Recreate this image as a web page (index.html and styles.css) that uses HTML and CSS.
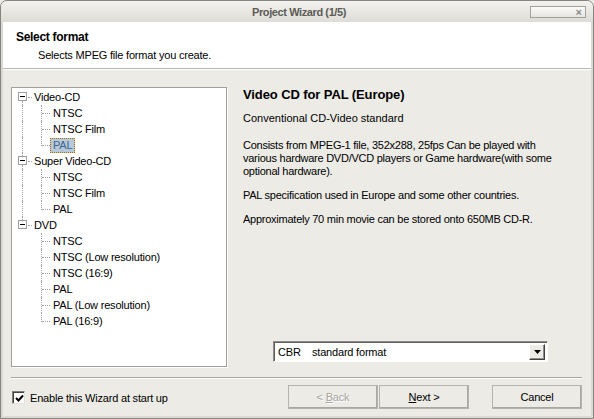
FILE: index.html
```html
<!DOCTYPE html>
<html>
<head>
<meta charset="utf-8">
<title>Project Wizard</title>
<link rel="stylesheet" href="styles.css">
</head>
<body>
<div class="window">
  <div class="titlebar">
    <span class="title">Project Wizard (1/5)</span>
    <span class="close"><span class="x">×</span></span>
  </div>
  <div class="client">
    <div class="header">
      <div class="h-title">Select format</div>
      <div class="h-sub">Selects MPEG file format you create.</div>
    </div>
    <div class="main">
      <div class="tree">
        <div class="row root first"><span class="vdown"></span><span class="box"></span><span class="hl"></span><span class="label">Video-CD</span></div>
        <div class="row child"><span class="trunk"></span><span class="cv"></span><span class="ch"></span><span class="label">NTSC</span></div>
        <div class="row child"><span class="trunk"></span><span class="cv"></span><span class="ch"></span><span class="label">NTSC Film</span></div>
        <div class="row child lastc"><span class="trunk"></span><span class="cv"></span><span class="ch"></span><span class="label sel">PAL</span></div>
        <div class="row root"><span class="vup"></span><span class="vdown"></span><span class="box"></span><span class="hl"></span><span class="label">Super Video-CD</span></div>
        <div class="row child"><span class="trunk"></span><span class="cv"></span><span class="ch"></span><span class="label">NTSC</span></div>
        <div class="row child"><span class="trunk"></span><span class="cv"></span><span class="ch"></span><span class="label">NTSC Film</span></div>
        <div class="row child lastc"><span class="trunk"></span><span class="cv"></span><span class="ch"></span><span class="label">PAL</span></div>
        <div class="row root"><span class="vup"></span><span class="box"></span><span class="hl"></span><span class="label">DVD</span></div>
        <div class="row child"><span class="cv"></span><span class="ch"></span><span class="label">NTSC</span></div>
        <div class="row child"><span class="cv"></span><span class="ch"></span><span class="label">NTSC (Low resolution)</span></div>
        <div class="row child"><span class="cv"></span><span class="ch"></span><span class="label">NTSC (16:9)</span></div>
        <div class="row child"><span class="cv"></span><span class="ch"></span><span class="label">PAL</span></div>
        <div class="row child"><span class="cv"></span><span class="ch"></span><span class="label">PAL (Low resolution)</span></div>
        <div class="row child lastc"><span class="cv"></span><span class="ch"></span><span class="label">PAL (16:9)</span></div>
      </div>
      <div class="detail">
        <div class="d-title">Video CD for PAL (Europe)</div>
        <p class="d-first">Conventional CD-Video standard</p>
        <p>Consists from MPEG-1 file, 352x288, 25fps Can be played with<br>various hardware DVD/VCD players or Game hardware(with some<br>optional hardware).</p>
        <p>PAL specification used in Europe and some other countries.</p>
        <p>Approximately 70 min movie can be stored onto 650MB CD-R.</p>
        <div class="combo">
          <span class="combo-text">CBR&nbsp;&nbsp;&nbsp; standard format</span>
          <span class="combo-btn"><svg width="7" height="4" viewBox="0 0 7 4"><path d="M0 0H7L3.5 4Z" fill="#000"/></svg></span>
        </div>
      </div>
    </div>
    <div class="sep"></div>
    <div class="footer">
      <label class="check">
        <span class="cbox"><svg width="9" height="9" viewBox="0 0 9 9"><path d="M1 4 L3.5 6.5 L8 1.5" stroke="#000" stroke-width="2" fill="none"/></svg></span>
        <span>Enable this Wizard at start up</span>
      </label>
      <div class="buttons">
        <button class="btn disabled">&lt; <u>B</u>ack</button>
        <button class="btn next"><u>N</u>ext &gt;</button>
        <button class="btn cancel">Cancel</button>
      </div>
    </div>
  </div>
</div>
</body>
</html>
```

FILE: styles.css
```css
* { box-sizing: border-box; }
html, body { margin: 0; padding: 0; background: #ecebe6; }
body {
  font-family: "Liberation Sans", Arial, sans-serif;
  font-size: 11px;
  color: #000;
}
.window {
  width: 594px;
  height: 419px;
  display: flex;
  flex-direction: column;
  background: #d9d8d2;
  border: 1px solid #85847f;
  border-radius: 7px 7px 0 0;
  overflow: hidden;
}
.titlebar {
  height: 21px;
  flex: none;
  display: flex;
  align-items: center;
  justify-content: center;
  position: relative;
  background: linear-gradient(#f3f2ee, #dedcd6);
}
.title {
  font-weight: bold;
  color: #5b5b58;
  letter-spacing: -0.4px;
  padding-left: 4px;
}
.close {
  position: absolute;
  right: 7px;
  top: 5px;
  width: 56px;
  height: 12px;
  border: 1px solid #a3a29c;
  background: linear-gradient(#fbfbf9, #e6e5e0);
  display: flex;
  justify-content: flex-end;
  align-items: center;
  padding-right: 3px;
}
.close .x {
  color: #8a8a86;
  font-size: 11px;
  font-weight: bold;
  line-height: 10px;
}
.client {
  flex: 1;
  display: flex;
  flex-direction: column;
  margin: 0 2px 2px 2px;
  background: #ecebe6;
}
.header {
  height: 47px;
  flex: none;
  background: #fff;
  border-bottom: 1px solid #b8b7b1;
  padding: 8px 0 0 13px;
}
.h-title {
  font-weight: bold;
  font-size: 12px;
  line-height: 14px;
  letter-spacing: -0.3px;
}
.h-sub {
  margin-top: 5px;
  padding-left: 22px;
  line-height: 13px;
  letter-spacing: -0.2px;
}
.main {
  height: 308px;
  flex: none;
  display: flex;
  padding: 17px 0 0 8px;
  border-top: 1px solid #fff;
}
.tree {
  width: 216px;
  height: 280px;
  flex: none;
  background: #fff;
  border: 1px solid #a09f9a;
  box-shadow: 1px 1px 0 #fff;
  padding-top: 1px;
}
.row {
  position: relative;
  height: 16px;
  display: flex;
  align-items: center;
}
.row .label {
  height: 15px;
  line-height: 13px;
  padding: 0 2px;
  border: 1px solid transparent;
  letter-spacing: -0.2px;
  white-space: nowrap;
}
.root .label { margin-left: 19px; }
.child .label { margin-left: 38px; }
.label.sel {
  background: #b7c8d8;
  color: #3b6790;
  border: 1px dotted #b06a00;
}
.box {
  position: absolute;
  left: 6px;
  top: 3px;
  width: 9px;
  height: 9px;
  border: 1px solid #9a9f9f;
  background: #fff;
}
.box::after {
  content: "";
  position: absolute;
  left: 1px;
  top: 3px;
  width: 5px;
  height: 1px;
  background: #000;
}
.hl {
  position: absolute;
  left: 16px;
  top: 8px;
  width: 4px;
  border-top: 1px dotted #a0a0a0;
}
.vup {
  position: absolute;
  left: 10px;
  top: 0;
  height: 3px;
  border-left: 1px dotted #a0a0a0;
}
.vdown {
  position: absolute;
  left: 10px;
  top: 12px;
  height: 4px;
  border-left: 1px dotted #a0a0a0;
}
.trunk {
  position: absolute;
  left: 10px;
  top: 0;
  height: 16px;
  border-left: 1px dotted #a0a0a0;
}
.cv {
  position: absolute;
  left: 29px;
  top: 0;
  height: 16px;
  border-left: 1px dotted #a0a0a0;
}
.lastc .cv { height: 9px; }
.ch {
  position: absolute;
  left: 30px;
  top: 8px;
  width: 8px;
  border-top: 1px dotted #a0a0a0;
}
.detail {
  flex: 1;
  display: flex;
  flex-direction: column;
  margin-left: 16px;
  height: 280px;
}
.d-title {
  font-weight: bold;
  font-size: 13px;
  line-height: 16px;
  letter-spacing: -0.1px;
}
.detail p {
  margin: 0 0 11px 0;
  line-height: 13px;
  white-space: nowrap;
  letter-spacing: -0.25px;
}
.detail p.d-first { margin-top: 9px; margin-bottom: 14px; letter-spacing: 0; }
.combo {
  margin: auto 0 5px 30px;
  width: 275px;
  height: 21px;
  background: #fff;
  border: 1px solid #8d8c88;
  border-right-color: #fff;
  border-bottom-color: #fff;
  box-shadow: inset 1px 1px 0 #5e5e5a;
  display: flex;
  align-items: center;
  justify-content: space-between;
  padding: 0 2px 0 4px;
}
.combo-text { letter-spacing: -0.2px; }
.combo-btn {
  width: 16px;
  height: 16px;
  background: #ecebe6;
  border: 1px solid #fff;
  border-right-color: #404040;
  border-bottom-color: #404040;
  box-shadow: inset -1px -1px 0 #8e8d88;
  display: flex;
  align-items: center;
  justify-content: center;
}
.sep {
  flex: none;
  height: 2px;
  margin: 0 9px 0 8px;
  border-top: 1px solid #a7a6a0;
  border-bottom: 1px solid #fff;
}
.footer {
  flex: 1;
  display: flex;
  align-items: flex-start;
  justify-content: space-between;
  padding: 6px 9px 0 9px;
}
.check {
  display: flex;
  align-items: center;
  gap: 5px;
  margin-top: 6px;
  letter-spacing: -0.2px;
}
.cbox {
  width: 13px;
  height: 13px;
  background: #fff;
  border: 1px solid #7f7e7a;
  border-right-color: #e4e3de;
  border-bottom-color: #e4e3de;
  box-shadow: inset 1px 1px 0 #404040;
  display: flex;
  align-items: center;
  justify-content: center;
  padding: 1px 0 0 1px;
}
.buttons {
  display: flex;
}
.btn {
  font-family: "Liberation Sans", Arial, sans-serif;
  font-size: 11px;
  letter-spacing: -0.2px;
  width: 90px;
  height: 24px;
  padding: 0;
  background: #ecebe6;
  border: 1px solid #fff;
  border-right-color: #6e6d69;
  border-bottom-color: #6e6d69;
  box-shadow: inset -1px -1px 0 #a8a7a2;
  outline: 1px solid #b4b3ae;
  outline-offset: -1px;
  color: #000;
}
.btn u { text-decoration: underline; }
.btn.disabled { color: #a5a49f; text-shadow: 1px 1px 0 #fff; }
.btn.next { margin-left: 1px; }
.btn.cancel { margin-left: 23px; }
```
